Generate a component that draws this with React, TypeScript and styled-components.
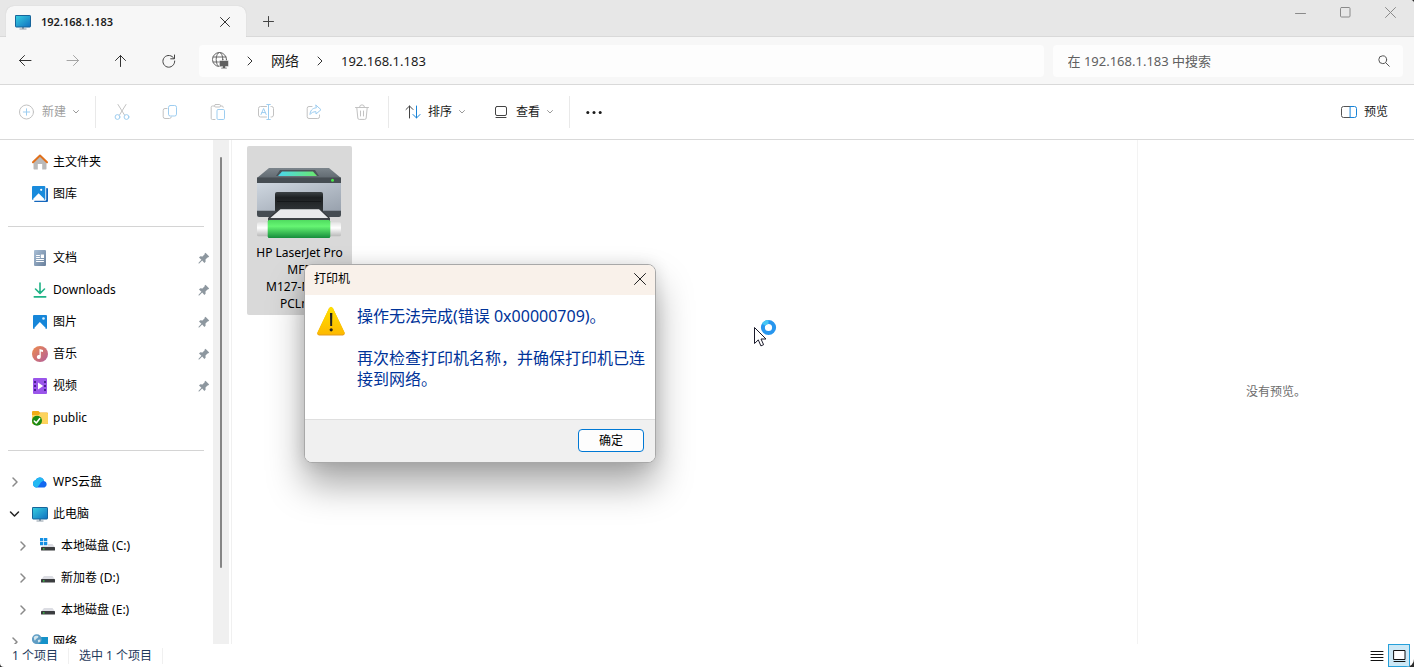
import React from "react";
import styled, { createGlobalStyle } from "styled-components";

const GlobalStyle = createGlobalStyle`
  * { box-sizing: border-box; }
  body {
    margin: 0;
    background: #2b2b2b;
    font-family: "Noto Sans", "Noto Sans CJK SC", sans-serif;
    font-size: 12px;
    line-height: 16px;
    color: #1b1b1b;
  }
  button, input { font: inherit; color: inherit; }
  button {
    border: 0;
    padding: 0;
    background: none;
    display: inline-flex;
    align-items: center;
    justify-content: center;
  }
  ul, p, h2 { margin: 0; padding: 0; list-style: none; font-weight: 400; font-size: inherit; }
  a { color: inherit; text-decoration: none; }
  svg { display: block; flex: none; }
`;

const Window = styled.div`
  position: relative;
  height: 100vh;
  display: flex;
  flex-direction: column;
  background: #fff;
  border-radius: 0 4px 8px 4px;
  overflow: hidden;
`;

/* ---------- title bar ---------- */
const TitleBar = styled.header`
  height: 37px;
  flex: none;
  display: flex;
  align-items: flex-end;
  padding-left: 6px;
  background: #e7e7e7;
  box-shadow: inset 0 -1px #d9d9d9;
`;
const Tab = styled.div`
  width: 240px;
  height: 31px;
  display: flex;
  align-items: center;
  padding: 0 16px 0 9px;
  gap: 10px;
  background: #f7f7f7;
  border-radius: 8px 8px 0 0;
  box-shadow: 0 0 1px #bdbdbd;
  clip-path: inset(-2px -2px 0 -2px);
`;
const TabTitle = styled.span`
  flex: 1;
  font-size: 11px;
  font-weight: 600;
`;
const NewTab = styled.button`
  width: 44px;
  height: 31px;
`;
const Controls = styled.div`
  margin: 0 1px 0 auto;
  align-self: flex-start;
  display: flex;
`;
const ControlButton = styled.button`
  width: 45px;
  height: 24px;
`;

/* ---------- navigation bar ---------- */
const NavBar = styled.div`
  height: 48px;
  flex: none;
  display: flex;
  align-items: center;
  padding: 0 11px 0 1px;
  background: #f7f7f7;
  border-bottom: 1px solid #d9d9d9;
`;
const NavButton = styled.button`
  width: 48px;
  height: 32px;
`;
const AddressBar = styled.nav`
  flex: 1;
  height: 32px;
  margin: 0 9px 0 6px;
  padding-left: 13px;
  display: flex;
  align-items: center;
  gap: 15px;
  background: #fdfdfd;
  border-radius: 4px;
`;
const Crumb = styled.a<{ $size: number }>`
  font-size: ${(p) => p.$size}px;
  line-height: 20px;
`;
const SearchBox = styled.label`
  width: 25%;
  height: 32px;
  padding: 0 13px 0 15px;
  display: flex;
  align-items: center;
  background: #fdfdfd;
  border-radius: 4px;
`;
const SearchInput = styled.input`
  flex: 1;
  min-width: 0;
  padding: 0;
  border: 0;
  outline: 0;
  background: none;
  font-size: 13px;
  line-height: 20px;
  &::placeholder { color: #606060; opacity: 1; }
`;

/* ---------- command bar ---------- */
const CommandBar = styled.div`
  height: 55px;
  flex: none;
  display: flex;
  align-items: center;
  padding: 0 26px 0 18px;
  border-bottom: 1px solid #d9d9d9;
`;
const Command = styled.button<{ $muted?: boolean }>`
  height: 32px;
  gap: 7px;
  color: ${(p) => (p.$muted ? "#a0a0a0" : "#1b1b1b")};
`;
const IconCommand = styled.button`
  width: 48px;
  height: 32px;
`;
const CommandGroup = styled.div<{ $pad: number }>`
  display: flex;
  align-items: center;
  gap: 28px;
  padding: 0 ${(p) => p.$pad}px;
`;
const IconGroup = styled.div`
  display: flex;
  padding: 0 2px;
`;
const Separator = styled.span`
  width: 1px;
  height: 32px;
  background: #e9e9e9;
`;
const PreviewToggle = styled(Command)`
  margin-left: auto;
`;

/* ---------- body ---------- */
const Body = styled.div`
  flex: 1;
  min-height: 0;
  display: flex;
`;
const Sidebar = styled.nav`
  width: 213px;
  flex: none;
  padding-top: 6px;
  overflow: hidden;
  color: #000;
`;
const Row = styled.a<{ $depth?: number }>`
  height: 32px;
  display: flex;
  align-items: center;
  gap: 5px;
  padding: 0 3px 0 ${(p) => (p.$depth || 0) * 8}px;
`;
const Twisty = styled.span`
  width: 27px;
  padding-left: 9px;
  flex: none;
`;
const RowLabel = styled.span`
  flex: 1;
`;
const Divider = styled.li`
  height: 32px;
  margin: 0 9px 0 8px;
  display: flex;
  align-items: center;
  &::before {
    content: "";
    flex: 1;
    height: 1px;
    background: #d4d4d4;
  }
`;
const ScrollTrack = styled.div`
  width: 16px;
  flex: none;
  background: #f0f0f0;
  padding: 17px 7px 76px;
  display: flex;
`;
const ScrollThumb = styled.div`
  flex: 1;
  background: #868686;
  border-radius: 1px;
`;
const Files = styled.main`
  flex: 1;
  margin-left: 2px;
  padding: 6px 15px;
  border-left: 1px solid #f0f0f0;
`;
const Tile = styled.button`
  width: 105px;
  padding: 21px 0 3px;
  display: flex;
  flex-direction: column;
  gap: 5px;
  background: #d9d9d9;
  border-radius: 2px;
  color: #000;
  line-height: 17px;
`;
const PreviewPane = styled.aside`
  width: 277px;
  flex: none;
  display: flex;
  align-items: center;
  justify-content: center;
  border-left: 1px solid #f3f3f3;
  color: #6d6d6d;
`;

/* ---------- status bar ---------- */
const StatusBar = styled.footer`
  height: 23px;
  flex: none;
  display: flex;
  align-items: center;
  padding: 0 4px 0 12px;
  gap: 10px;
  color: #1e395b;
`;
const StatusRule = styled.span`
  width: 1px;
  height: 16px;
  background: #f0f0f0;
`;
const ViewModes = styled.div`
  margin-left: auto;
  display: flex;
`;
const ViewMode = styled.button<{ $on?: boolean }>`
  width: 22px;
  height: 23px;
  background: ${(p) => (p.$on ? "#cce8f6" : "transparent")};
  border: 1px solid ${(p) => (p.$on ? "#26a0da" : "transparent")};
`;

/* ---------- message box ---------- */
const Dialog = styled.section`
  position: absolute;
  left: 304px;
  top: 264px;
  width: 352px;
  border: 1px solid #a8a8a8;
  border-radius: 8px;
  background: #fff;
  overflow: hidden;
  color: #000;
  box-shadow: 0 22px 36px rgba(0, 0, 0, 0.34), 0 0 16px rgba(0, 0, 0, 0.12);
`;
const DialogTitle = styled.div`
  height: 30px;
  display: flex;
  align-items: center;
  justify-content: space-between;
  padding: 0 9px 2px;
  background: #f9f1ea;
`;
const DialogBody = styled.div`
  display: flex;
  gap: 12px;
  padding: 11px 8px 29px 12px;
`;
const Message = styled.div`
  width: 290px;
  display: grid;
  gap: 21px;
  font-size: 16px;
  line-height: 21px;
  color: #003399;
`;
const DialogFooter = styled.div`
  height: 43px;
  display: flex;
  align-items: center;
  justify-content: flex-end;
  padding: 0 11px 1px;
  background: #f0f0f0;
  border-top: 1px solid #dfdfdf;
`;
const OkButton = styled.button`
  width: 66px;
  height: 23px;
  border: 1px solid #0078d4;
  border-radius: 4px;
  background: #fdfdfd;
`;
const Pointer = styled.svg`
  position: absolute;
  left: 752px;
  top: 318px;
`;

/* ---------- icons ---------- */
type IconProps = { w?: number; h?: number; stroke?: string; sw?: number; children: React.ReactNode };
const Icon = ({ w = 16, h = 16, stroke = "#444", sw = 1, children }: IconProps) => (
  <svg width={w} height={h} viewBox={`0 0 ${w} ${h}`} fill="none" stroke={stroke} strokeWidth={sw} strokeLinecap="round" strokeLinejoin="round" aria-hidden="true">
    {children}
  </svg>
);
const GREY = "#c2c2c2";
const BLUE = "#9dcdf0";

const Monitor = () => (
  <Icon stroke="none">
    <defs>
      <linearGradient id="screen" x1="0" y1="0" x2="1" y2="1">
        <stop offset="0" stopColor="#38d0e0" />
        <stop offset="1" stopColor="#0f6fc0" />
      </linearGradient>
    </defs>
    <path d="M7 13h2v2H7z" fill="#8c9aa6" />
    <path d="M4.500 14.500h7v1h-7z" fill="#8c9aa6" />
    <rect x="0.500" y="1.500" width="15" height="11.500" rx="0.600" fill="url(#screen)" stroke="#17649a" />
  </Icon>
);
const CloseIcon = ({ color = "#333", s = 10 }: { color?: string; s?: number }) => (
  <Icon w={s} h={s} stroke={color}>
    <path d={`M.5.5l${s - 1} ${s - 1}M${s - 0.5}.5l-${s - 1} ${s - 1}`} />
  </Icon>
);
const ChevronRight = ({ color = "#333", sw = 1 }: { color?: string; sw?: number }) => (
  <Icon w={12} h={12} stroke={color} sw={sw}><path d="M4 2l4 4-4 4" /></Icon>
);
const ChevronDown = ({ color = "#333", sw = 1 }: { color?: string; sw?: number }) => (
  <Icon w={12} h={12} stroke={color} sw={sw}><path d="M1.500 4l4 4 4-4" /></Icon>
);
const SmallDown = () => (
  <Icon w={6} h={6} stroke="#999"><path d="M.5 1.500L3 4l2.500-2.500" /></Icon>
);
const Globe = () => (
  <Icon w={17} h={17} stroke="#666">
    <circle cx="7.500" cy="7.500" r="7" />
    <ellipse cx="7.500" cy="7.500" rx="3.300" ry="7" />
    <path d="M1.200 5h12.800M1.200 10h8" />
    <path d="M7.500 8.500h9v6h-3v1h1.500v1.200H9v-1.200h1.500v-1h-3z" fill="#606060" stroke="#fdfdfd" strokeWidth="0.500" />
  </Icon>
);
const HomeIcon = () => (
  <Icon stroke="none">
    <path d="M1.500 8L8 2l6.500 6v6.700a.7.7 0 0 1-.7.700H10.200V10H5.800v5.400H2.200a.7.7 0 0 1-.7-.7z" fill="#b9b9b9" />
    <path d="M1 8.200L8 1.600l7 6.600" fill="none" stroke="#e0701c" strokeWidth="2" strokeLinejoin="round" strokeLinecap="round" />
  </Icon>
);
const GalleryIcon = () => (
  <Icon stroke="none">
    <path d="M14.500 2h.5a1 1 0 0 1 1 1v12a1 1 0 0 1-1 1H3a1 1 0 0 1-1-1z" fill="#1467bd" />
    <rect x="0" y="0" width="14.200" height="14.700" rx="1.200" fill="#fff" />
    <rect x="0" y="0" width="13.300" height="14" rx="1" fill="#198bdc" />
    <path d="M.8 13.300L6.600 7.200l6 6.100-1 .7H1.800z" fill="#fff" />
    <circle cx="9.200" cy="3.800" r="1.100" fill="#fff" />
  </Icon>
);
const PictureIcon = () => (
  <Icon stroke="none">
    <rect x="1" y="1" width="14" height="14" rx="1" fill="#1686d9" />
    <path d="M2 14.200L7.800 8l6.200 6.200-1 .800H3z" fill="#fff" />
    <circle cx="11.500" cy="4.500" r="1.300" fill="#d8f1ff" />
  </Icon>
);
const DocIcon = () => (
  <Icon stroke="none">
    <defs>
      <linearGradient id="doc" x1="0" y1="0" x2="1" y2="1"><stop stopColor="#a9bfd6" /><stop offset="1" stopColor="#687f9b" /></linearGradient>
    </defs>
    <rect x="2" y="0" width="12" height="16" rx="1" fill="url(#doc)" />
    <path d="M4.500 5.500h3M4.500 7.500h3M4.500 9.500h7M4.500 11.500h7" stroke="#fff" />
    <path d="M8.800 4.500H12V8H8.800z" fill="#fff" />
  </Icon>
);
const DownloadIcon = () => (
  <Icon stroke="#20b286" sw={1.6}><path d="M8 1v10M3.500 7L8 11.300 12.500 7M2.300 14.900h11.400" /></Icon>
);
const MusicIcon = () => (
  <Icon stroke="none">
    <defs>
      <linearGradient id="music" x1="0" y1="0" x2="1" y2="1"><stop stopColor="#ee8b4c" /><stop offset="1" stopColor="#b25d9c" /></linearGradient>
    </defs>
    <circle cx="8" cy="8" r="8" fill="url(#music)" />
    <path d="M7.500 3l3.500 1v2L8.800 5.500V11a2 2 0 1 1-1.300-1.900z" fill="#fff" />
  </Icon>
);
const VideoIcon = () => (
  <Icon stroke="none">
    <rect x="1" y="0" width="14" height="16" rx="1" fill="#9a55ea" />
    <path d="M2 3h2v2H2zM2 7h2v2H2zM2 11h2v2H2zM12 3h2v2h-2zM12 7h2v2h-2zM12 11h2v2h-2z" fill="#4a1f93" />
    <path d="M6 4.500l5.200 3.500L6 11.500z" fill="#fff" />
  </Icon>
);
const FolderIcon = () => (
  <Icon stroke="none">
    <path d="M0 2a1 1 0 0 1 1-1h5.500L8 2.500h7a1 1 0 0 1 1 1V13a1 1 0 0 1-1 1H0z" fill="#f3ac14" />
    <path d="M0 5h6.500L8.500 3H15a1 1 0 0 1 1 1v9a1 1 0 0 1-1 1H0z" fill="#fdd35c" />
    <circle cx="5" cy="10.800" r="5" fill="#1e8a10" />
    <path d="M2.300 11l2 2 3.300-4.300" fill="none" stroke="#fff" strokeWidth="1.600" />
  </Icon>
);
const CloudIcon = () => (
  <Icon stroke="none">
    <path d="M4.500 13.500a3.700 3.700 0 0 1-1-7.200A4.500 4.500 0 0 1 12 7a3.400 3.400 0 0 1 .5 6.500z" fill="#1268f0" />
    <path d="M3.500 6.300A4.500 4.500 0 0 1 12 7c-3 0-3.500 2.500-5.500 5-.7.900-1.500 1.500-2 1.500a3.700 3.700 0 0 1-1-7.200z" fill="#23b9f2" />
  </Icon>
);
const DriveIcon = ({ system }: { system?: boolean }) => (
  <Icon stroke="none">
    <path d="M4 6h8.500L15 9.500H1z" fill="#dcdde3" />
    <rect x="1" y="9" width="14" height="3.500" rx="0.600" fill="#3b3d3f" />
    <rect x="3" y="10.300" width="1.500" height="1.200" fill="#3be04b" />
    {system && (
      <>
        <path d="M0 0h8v8H0z" fill="#fff" />
        <path d="M0 0h3.300v3.300H0zM4 0h3.300v3.300H4zM0 4h3.300v3.300H0zM4 4h3.300v3.300H4z" fill="#1590e4" />
      </>
    )}
  </Icon>
);
const NetworkIcon = () => (
  <Icon stroke="none">
    <rect x="4" y="3" width="12" height="10.500" fill="#1592c9" />
    <path d="M8 13.500h4V15H8z" fill="#8c9aa6" />
    <circle cx="4.800" cy="5.200" r="4.900" fill="#5f9dc4" />
    <path d="M1.800 3C3.200 1.300 6 1.300 6.400 2.500S4 4.500 3.400 6 1.800 5.500 1.800 3zM5.800 6l2.500-.5v2L6.200 8.600z" fill="#d3e6ee" />
  </Icon>
);
const PinIcon = () => (
  <Icon w={12} h={12} stroke="none">
    <path d="M7.500.8l3.700 3.700-1.200 1-.5-.1-2 2.100.1 2.200-1.200 1.200-2.200-2.300-3 2.900-.7-.1.100-.7 2.800-3L1 5.500l1.300-1.200 2.200.2L6.700 2.300l-.2-.5z" fill="#8d979f" />
  </Icon>
);

const PrinterIcon = () => (
  <svg width="86" height="72" viewBox="1 0 86 72" aria-hidden="true">
    <defs>
      <linearGradient id="lid" x1="0" y1="0" x2="0" y2="1"><stop stopColor="#7c858c" /><stop offset="1" stopColor="#616a71" /></linearGradient>
      <linearGradient id="shell" x1="0" y1="0" x2="1" y2="1"><stop stopColor="#cfd7e0" /><stop offset="1" stopColor="#98a1ad" /></linearGradient>
      <linearGradient id="panel" x1="0" y1="0" x2="1" y2="0"><stop stopColor="#4bd6ee" /><stop offset="1" stopColor="#6ae86d" /></linearGradient>
      <linearGradient id="roll" x1="0" y1="0" x2="0" y2="1"><stop stopColor="#50dc60" /><stop offset="0.350" stopColor="#66f573" /><stop offset="1" stopColor="#168d3c" /></linearGradient>
      <linearGradient id="pipe" x1="0" y1="0" x2="0" y2="1"><stop stopColor="#e3e3e3" /><stop offset="0.400" stopColor="#ffffff" /><stop offset="1" stopColor="#b9b9b9" /></linearGradient>
      <linearGradient id="slot" x1="0" y1="0" x2="0" y2="1"><stop stopColor="#3c4245" /><stop offset="0.300" stopColor="#1c1f21" /><stop offset="1" stopColor="#303538" /></linearGradient>
    </defs>
    <path d="M13 1h60l12 10H1z" fill="url(#lid)" />
    <path d="M24 3h35l4 6H20z" fill="#4b5359" />
    <path d="M26 4.500h31l4 4.500H22z" fill="url(#panel)" />
    <path d="M1 10.500h84V16H1z" fill="#464d53" />
    <circle cx="76.500" cy="13.200" r="1.500" fill="#48e948" />
    <path d="M1 16h84v28H1z" fill="url(#shell)" />
    <path d="M1 43.700h84V48a2 2 0 0 1-2 2H3a2 2 0 0 1-2-2z" fill="#454c52" />
    <path d="M19 27a2 2 0 0 1 2-2h44a2 2 0 0 1 2 2v17H19z" fill="url(#slot)" />
    <path d="M21 34.500h44" stroke="#15181a" />
    <path d="M23 42h41l10 9v3H12v-3z" fill="#34393d" />
    <path d="M24.500 42.300h38.500l9.500 9H14z" fill="#e9ebed" />
    <rect x="1" y="55.300" width="84" height="14" rx="1.500" fill="url(#pipe)" />
    <path d="M12 51h62v4H12z" fill="#3d4347" />
    <rect x="11.700" y="53" width="62.600" height="18" rx="1.500" fill="url(#roll)" />
  </svg>
);
const WarningIcon = () => (
  <svg width="28" height="31" viewBox="0 0 28 31" aria-hidden="true">
    <defs><linearGradient id="warn" x1="0" y1="0" x2="0" y2="1"><stop stopColor="#ffe100" /><stop offset="1" stopColor="#fdb900" /></linearGradient></defs>
    <path d="M12 2.500q2-3 4 0l11.400 24q1 2.500-1.500 3H2q-2.500-.5-1.400-3z" fill="#e39b1c" />
    <path d="M12 2.200q2-3 4 0l11.400 23.800q1 2.200-1.500 2.500H2q-2.500-.3-1.400-2.500z" fill="url(#warn)" />
    <path d="M13 7h2.300l-.2 13h-1.900z" fill="#222" />
    <circle cx="14.200" cy="23.800" r="1.600" fill="#222" />
  </svg>
);

/* ---------- sidebar data ---------- */
type Item = { label: string; icon: React.ReactNode; pinned?: boolean; twisty?: "open" | "closed"; depth?: number };
const groups: Item[][] = [
  [
    { label: "主文件夹", icon: <HomeIcon /> },
    { label: "图库", icon: <GalleryIcon /> },
  ],
  [
    { label: "文档", icon: <DocIcon />, pinned: true },
    { label: "Downloads", icon: <DownloadIcon />, pinned: true },
    { label: "图片", icon: <PictureIcon />, pinned: true },
    { label: "音乐", icon: <MusicIcon />, pinned: true },
    { label: "视频", icon: <VideoIcon />, pinned: true },
    { label: "public", icon: <FolderIcon /> },
  ],
  [
    { label: "WPS云盘", icon: <CloudIcon />, twisty: "closed" },
    { label: "此电脑", icon: <Monitor />, twisty: "open" },
    { label: "本地磁盘 (C:)", icon: <DriveIcon system />, twisty: "closed", depth: 1 },
    { label: "新加卷 (D:)", icon: <DriveIcon />, twisty: "closed", depth: 1 },
    { label: "本地磁盘 (E:)", icon: <DriveIcon />, twisty: "closed", depth: 1 },
    { label: "网络", icon: <NetworkIcon />, twisty: "closed" },
  ],
];

export default function App() {
  return (
    <>
      <GlobalStyle />
      <Window>
        <TitleBar>
          <Tab>
            <Monitor />
            <TabTitle>192.168.1.183</TabTitle>
            <button aria-label="关闭标签页"><CloseIcon /></button>
          </Tab>
          <NewTab aria-label="新标签页"><Icon w={11} h={11}><path d="M5.500.5v10M.5 5.500h10" /></Icon></NewTab>
          <Controls>
            <ControlButton aria-label="最小化"><Icon w={11} h={11} stroke="#8a8a8a"><path d="M.5 6.500h10" /></Icon></ControlButton>
            <ControlButton aria-label="最大化"><Icon w={11} h={11} stroke="#8a8a8a"><rect x=".5" y=".5" width="9.500" height="9.500" rx="1" /></Icon></ControlButton>
            <ControlButton aria-label="关闭"><CloseIcon color="#8a8a8a" s={11} /></ControlButton>
          </Controls>
        </TitleBar>

        <NavBar>
          <NavButton aria-label="后退"><Icon stroke="#333"><path d="M14 7.500H2.500M7.500 2.500l-5 5 5 5" /></Icon></NavButton>
          <NavButton aria-label="前进" disabled><Icon stroke="#a5a5a5"><path d="M2 7.500h11.500M8.500 2.500l5 5-5 5" /></Icon></NavButton>
          <NavButton aria-label="向上"><Icon stroke="#333"><path d="M7.500 13.500V2.500M2.500 7.500l5-5 5 5" /></Icon></NavButton>
          <NavButton aria-label="刷新"><Icon stroke="#444"><path d="M13 5.500A5.900 5.900 0 1 0 13.700 8M13.500 2v3.800H9.700" /></Icon></NavButton>
          <AddressBar aria-label="地址">
            <Globe />
            <ChevronRight />
            <Crumb href="#" $size={14}>网络</Crumb>
            <ChevronRight />
            <Crumb href="#" $size={13}>192.168.1.183</Crumb>
          </AddressBar>
          <SearchBox>
            <SearchInput type="text" aria-label="搜索" placeholder="在 192.168.1.183 中搜索" />
            <Icon w={12} h={12} stroke="#555"><circle cx="4.700" cy="4.700" r="3.900" /><path d="M7.700 7.700l3.600 3.600" /></Icon>
          </SearchBox>
        </NavBar>

        <CommandBar>
          <Command $muted disabled>
            <Icon w={17} stroke={GREY}><circle cx="8.500" cy="8" r="7" /><path d="M8.500 4.800v6.400M5.300 8h6.400" stroke={BLUE} /></Icon>
            新建
            <SmallDown />
          </Command>
          <CommandGroup $pad={8} />
          <Separator />
          <IconGroup>
            <IconCommand aria-label="剪切" disabled>
              <Icon stroke={GREY}><path d="M4 .5l6.500 10.500M12 .5L5.500 11" /><circle cx="3.500" cy="13" r="2.400" stroke={BLUE} /><circle cx="12.500" cy="13" r="2.400" stroke={BLUE} /></Icon>
            </IconCommand>
            <IconCommand aria-label="复制" disabled>
              <Icon stroke={GREY}><path d="M5 4.500H3a1.800 1.800 0 0 0-1.800 1.800v6.400A1.800 1.800 0 0 0 3 14.500h4.500A1.800 1.800 0 0 0 9.300 13" /><rect x="6.500" y="1.500" width="8" height="10.500" rx="1.800" stroke={BLUE} /></Icon>
            </IconCommand>
            <IconCommand aria-label="粘贴" disabled>
              <Icon stroke={GREY}><path d="M4.500 2H2.500A1.300 1.300 0 0 0 1.200 3.300v11A1.200 1.200 0 0 0 2.400 15.500H5M10.500 2h1.500a1.300 1.300 0 0 1 1.300 1.300" /><rect x="4.500" y=".5" width="6" height="2.500" rx="1.200" /><rect x="7" y="5.500" width="7.500" height="10" rx="1.200" stroke={BLUE} /></Icon>
            </IconCommand>
            <IconCommand aria-label="重命名" disabled>
              <Icon stroke={GREY}><path d="M8.500 2.500H2.500a2 2 0 0 0-2 2v6.500a2 2 0 0 0 2 2h6M13 2.500h.5a2 2 0 0 1 2 2v6.500a2 2 0 0 1-2 2H13" /><path d="M10.500 1v14M8.800.5h3.500M8.800 15.500h3.500M3 10.500l2.600-6 2.600 6M3.900 8.600h3.400" stroke={BLUE} /></Icon>
            </IconCommand>
            <IconCommand aria-label="共享" disabled>
              <Icon stroke={GREY}><path d="M6 2.500H3a1.800 1.800 0 0 0-1.800 1.800v8.400A1.800 1.800 0 0 0 3 14.500h8.700a1.800 1.800 0 0 0 1.800-1.800V11" /><path d="M10 1.200l5 4.500-5 4.300V7.700C7 7.700 5.500 8.700 4 10.500c.2-3.500 2-6.300 6-6.700z" stroke={BLUE} /></Icon>
            </IconCommand>
            <IconCommand aria-label="删除" disabled>
              <Icon stroke={GREY}><path d="M1.500 3.500h13M5.500 3.300a2.500 2.500 0 0 1 5 0M2.800 3.700l1 10.300a1.500 1.500 0 0 0 1.500 1.400h5.400a1.500 1.500 0 0 0 1.500-1.400l1-10.300M6.500 7v5M9.500 7v5" /></Icon>
            </IconCommand>
          </IconGroup>
          <Separator />
          <CommandGroup $pad={16}>
            <Command>
              <Icon stroke="#444"><path d="M4.500 14V2M1 5.500L4.500 2 8 5.500" /><path d="M11.500 2v12M8 10.500l3.500 3.500 3.500-3.500" stroke="#1883d7" /></Icon>
              排序
              <SmallDown />
            </Command>
            <Command>
              <Icon w={16} stroke="#444"><rect x="2.500" y="2.500" width="11" height="9" rx="1.500" /><path d="M3 13.500h10" /></Icon>
              查看
              <SmallDown />
            </Command>
          </CommandGroup>
          <Separator />
          <IconCommand aria-label="更多">
            <Icon stroke="none"><g fill="#1b1b1b"><circle cx="1.800" cy="8.500" r="1.500" /><circle cx="8" cy="8.500" r="1.500" /><circle cx="14.200" cy="8.500" r="1.500" /></g></Icon>
          </IconCommand>
          <PreviewToggle>
            <Icon stroke="#555"><path d="M9.500 2.500H2.500a2 2 0 0 0-2 2v7a2 2 0 0 0 2 2h7" /><path d="M9.500 2.500h4a2 2 0 0 1 2 2v7a2 2 0 0 1-2 2h-4z" stroke="#1883d7" /></Icon>
            预览
          </PreviewToggle>
        </CommandBar>

        <Body>
          <Sidebar aria-label="导航窗格">
            <ul>
              {groups.map((group, g) => (
                <React.Fragment key={g}>
                  {g > 0 && <Divider aria-hidden="true" />}
                  {group.map((item) => (
                    <li key={item.label}>
                      <Row href="#" $depth={item.depth}>
                        <Twisty>
                          {item.twisty === "closed" && <ChevronRight color="#8a8a8a" sw={1.5} />}
                          {item.twisty === "open" && <ChevronDown color="#222" sw={1.5} />}
                        </Twisty>
                        {item.icon}
                        <RowLabel>{item.label}</RowLabel>
                        {item.pinned && <PinIcon />}
                      </Row>
                    </li>
                  ))}
                </React.Fragment>
              ))}
            </ul>
          </Sidebar>
          <ScrollTrack><ScrollThumb /></ScrollTrack>
          <Files>
            <Tile>
              <PrinterIcon />
              <span>HP LaserJet Pro<br />MFP<br />M127-M128<br />PCLmS</span>
            </Tile>
          </Files>
          <PreviewPane>没有预览。</PreviewPane>
        </Body>

        <StatusBar>
          <span>1 个项目</span>
          <StatusRule />
          <span>选中 1 个项目</span>
          <StatusRule />
          <ViewModes>
            <ViewMode aria-label="详细信息"><Icon stroke="#111"><path d="M2 3.500h12M2 6.500h12M2 9.500h12M2 12.500h12" /></Icon></ViewMode>
            <ViewMode $on aria-label="大图标"><Icon stroke="#111"><rect x="3" y="2.500" width="11" height="9" fill="#fff" /><path d="M3 13.500h11" /></Icon></ViewMode>
          </ViewModes>
        </StatusBar>

        <Dialog role="dialog" aria-labelledby="dialog-title">
          <DialogTitle>
            <h2 id="dialog-title">打印机</h2>
            <button aria-label="关闭"><CloseIcon color="#222" s={12} /></button>
          </DialogTitle>
          <DialogBody>
            <WarningIcon />
            <Message>
              <p>操作无法完成(错误 0x00000709)。</p>
              <p>再次检查打印机名称，并确保打印机已连接到网络。</p>
            </Message>
          </DialogBody>
          <DialogFooter><OkButton>确定</OkButton></DialogFooter>
        </Dialog>

        <Pointer width="26" height="30" viewBox="0 0 26 30" aria-hidden="true">
          <circle cx="16.500" cy="9.500" r="5.600" fill="none" stroke="#2796ee" strokeWidth="4" />
          <path d="M11.600 6.700A5.600 5.600 0 0 1 16.500 3.900" fill="none" stroke="#46c6f5" strokeWidth="4" />
          <path d="M2.500 9.500v16l3.800-3.600 2.600 6 2.700-1.200-2.600-5.700h5z" fill="#fff" stroke="#1a1a2a" />
        </Pointer>
      </Window>
    </>
  );
}
